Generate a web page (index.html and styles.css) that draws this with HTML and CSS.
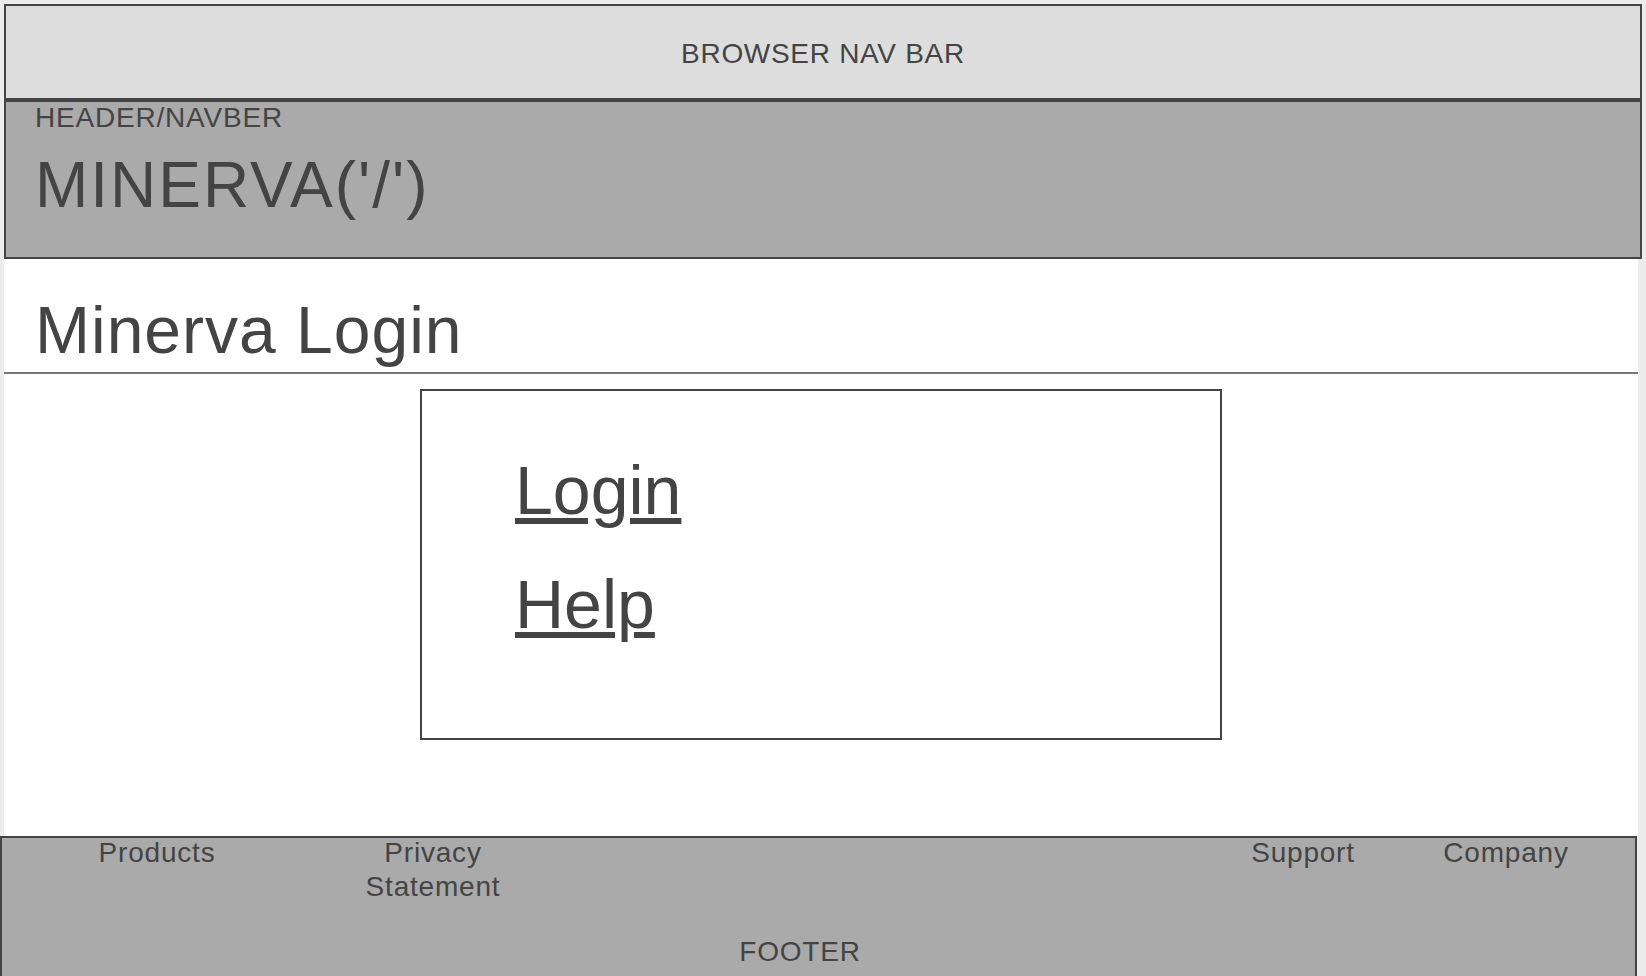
FILE: index.html
```html
<!DOCTYPE html>
<html lang="en">
<head>
<meta charset="utf-8">
<title>Minerva Login</title>
<link rel="stylesheet" href="styles.css">
</head>
<body>
  <div class="browser-bar">BROWSER NAV BAR</div>
  <header class="site-header">
    <div class="header-label">HEADER/NAVBER</div>
    <div class="brand">MINERVA('/')</div>
  </header>
  <main class="main">
    <div class="title-row">
      <h1 class="page-title">Minerva Login</h1>
    </div>
    <div class="login-box">
      <a class="box-link" href="#">Login</a>
      <a class="box-link box-link-second" href="#">Help</a>
    </div>
  </main>
  <footer class="site-footer">
    <div class="footer-links">
      <div class="f-item f-products">Products</div>
      <div class="f-item f-privacy">Privacy Statement</div>
      <div class="f-item f-support">Support</div>
      <div class="f-item f-company">Company</div>
    </div>
    <div class="footer-label">FOOTER</div>
  </footer>
</body>
</html>
```

FILE: styles.css
```css
html, body {
  margin: 0;
  padding: 0;
  overflow: hidden;
}

body {
  background: #ececec;
  padding: 4px 0 0 4px;
  font-family: "Liberation Sans", Arial, sans-serif;
  color: #444;
  height: 976px;
  box-sizing: border-box;
}

.browser-bar {
  box-sizing: border-box;
  width: 1638px;
  height: 96px;
  border: 2px solid #444;
  background: #dddddd;
  text-align: center;
  font-size: 28px;
  letter-spacing: 0.7px;
  padding-top: 32px;
}

.site-header {
  box-sizing: border-box;
  width: 1638px;
  height: 159px;
  border: 2px solid #444;
  background: #aaaaaa;
  padding-left: 29px;
}

.header-label {
  font-size: 28px;
  letter-spacing: 0.8px;
}

.brand {
  font-size: 64px;
  letter-spacing: 2px;
  margin-top: 14px;
}

.main {
  width: 1634px;
  height: 577px;
  background: #ffffff;
  overflow: hidden;
}

.title-row {
  padding: 33px 0 4px 31px;
  border-bottom: 2px solid #777;
}

.page-title {
  margin: 0;
  font-size: 66px;
  font-weight: normal;
  letter-spacing: 1px;
}

.login-box {
  box-sizing: border-box;
  width: 802px;
  height: 351px;
  margin: 15px auto 0;
  border: 2px solid #444;
  padding: 60px 0 0 93px;
}

.box-link {
  display: block;
  width: max-content;
  font-size: 68px;
  color: #444;
  text-decoration: underline;
}

.box-link-second {
  margin-top: 36px;
}

.site-footer {
  box-sizing: border-box;
  width: 1637px;
  height: 150px;
  margin-left: -4px;
  border: 2px solid #444;
  background: #aaaaaa;
}

.footer-links {
  display: flex;
  align-items: flex-start;
  padding: 0 54px 0 55px;
  margin-top: -2px;
  font-size: 28px;
  line-height: 34px;
  letter-spacing: 0.8px;
}

.f-item {
  text-align: center;
  width: 150px;
}

.f-products {
  width: 200px;
}

.f-privacy {
  margin-left: 101px;
}

.f-support {
  margin-left: auto;
}

.f-company {
  margin-left: 53px;
}

.footer-label {
  font-size: 28px;
  line-height: 34px;
  letter-spacing: 0.8px;
  text-align: center;
  padding-right: 37px;
  margin-top: 31px;
}
```
